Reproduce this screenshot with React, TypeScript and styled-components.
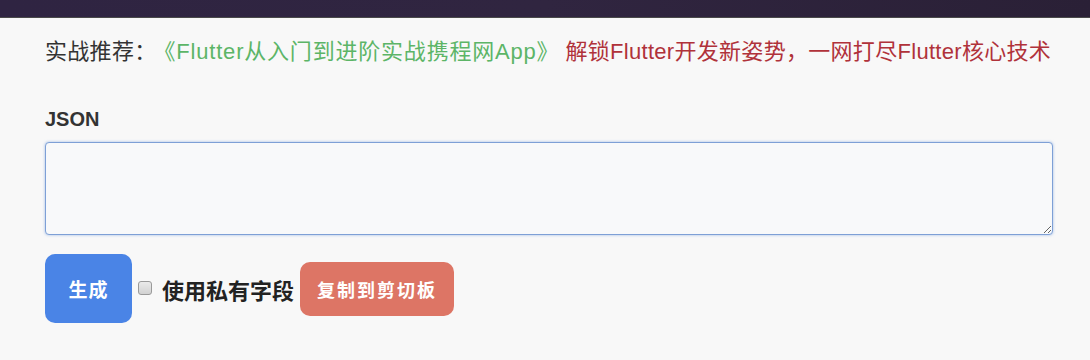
import React from 'react';
import styled, { createGlobalStyle } from 'styled-components';

const GlobalStyle = createGlobalStyle`
  html, body {
    margin: 0;
    padding: 0;
    background: #f8f8f8;
    font-family: "Liberation Sans", "Noto Sans CJK SC", sans-serif;
  }
`;

const TopBar = styled.div`
  height: 17px;
  background: linear-gradient(90deg, #2f2442, #302540 50%, #2a2036);
  border-bottom: 1px solid #4a4a4a;
`;

const Page = styled.main`
  padding: 21px 30px 0 45px;
`;

const Promo = styled.p`
  margin: 0;
  display: flex;
  align-items: baseline;
  font-size: 22px;
  line-height: 26px;
  letter-spacing: 0.3px;
  color: #333;
  white-space: nowrap;
`;

const PromoLink = styled.span<{ $tone: 'green' | 'red' }>`
  color: ${({ $tone }) => ($tone === 'green' ? '#5cb567' : '#b0323a')};
  margin-left: ${({ $tone }) => ($tone === 'green' ? '-3px' : '6px')};
  letter-spacing: ${({ $tone }) => ($tone === 'green' ? '0.8px' : '0.3px')};
`;

const Label = styled.h3`
  margin: 42px 0 11px;
  font-family: "Liberation Sans", Arial, sans-serif;
  font-size: 20px;
  line-height: 24px;
  font-weight: bold;
  color: #333;
`;

const Editor = styled.textarea`
  display: block;
  box-sizing: border-box;
  width: 1008px;
  height: 93px;
  margin: 0;
  border: 1px solid #7ea0d6;
  border-radius: 4px;
  background: #f8f9fa;
  box-shadow: 0 0 3px rgba(102, 150, 220, 0.6);
  outline: none;
`;

const Actions = styled.div`
  display: flex;
  align-items: center;
  margin-top: 19px;
`;

const Button = styled.button<{ $variant: 'primary' | 'danger' }>`
  border: none;
  border-radius: 10px;
  color: #fff;
  font-family: "Noto Sans CJK SC", sans-serif;
  font-weight: bold;
  cursor: pointer;
  background: ${({ $variant }) => ($variant === 'primary' ? '#4a84e6' : '#dd7565')};
  width: ${({ $variant }) => ($variant === 'primary' ? '87px' : '154px')};
  height: ${({ $variant }) => ($variant === 'primary' ? '69px' : '54px')};
  font-size: ${({ $variant }) => ($variant === 'primary' ? '19px' : '18px')};
  letter-spacing: ${({ $variant }) => ($variant === 'primary' ? '1px' : '2px')};
`;

const CheckLabel = styled.label`
  display: flex;
  align-items: center;
  gap: 10px;
  margin: 0 6px;
  font-family: "Noto Sans CJK SC", sans-serif;
  font-size: 22px;
  font-weight: bold;
  color: #222;
`;

const Check = styled.input`
  appearance: none;
  margin: 0;
  width: 14px;
  height: 14px;
  border: 1px solid #9a9a9a;
  border-radius: 3px;
  background: linear-gradient(#eaeaea, #d2d2d2);
  position: relative;
  top: -1px;
`;

export default function App() {
  return (
    <>
      <GlobalStyle />
      <TopBar />
      <Page>
        <Promo>
          实战推荐：
          <PromoLink $tone="green">《Flutter从入门到进阶实战携程网App》</PromoLink>
          <PromoLink $tone="red">解锁Flutter开发新姿势，一网打尽Flutter核心技术</PromoLink>
        </Promo>
        <Label>JSON</Label>
        <Editor />
        <Actions>
          <Button $variant="primary">生成</Button>
          <CheckLabel>
            <Check type="checkbox" />
            使用私有字段
          </CheckLabel>
          <Button $variant="danger">复制到剪切板</Button>
        </Actions>
      </Page>
    </>
  );
}
